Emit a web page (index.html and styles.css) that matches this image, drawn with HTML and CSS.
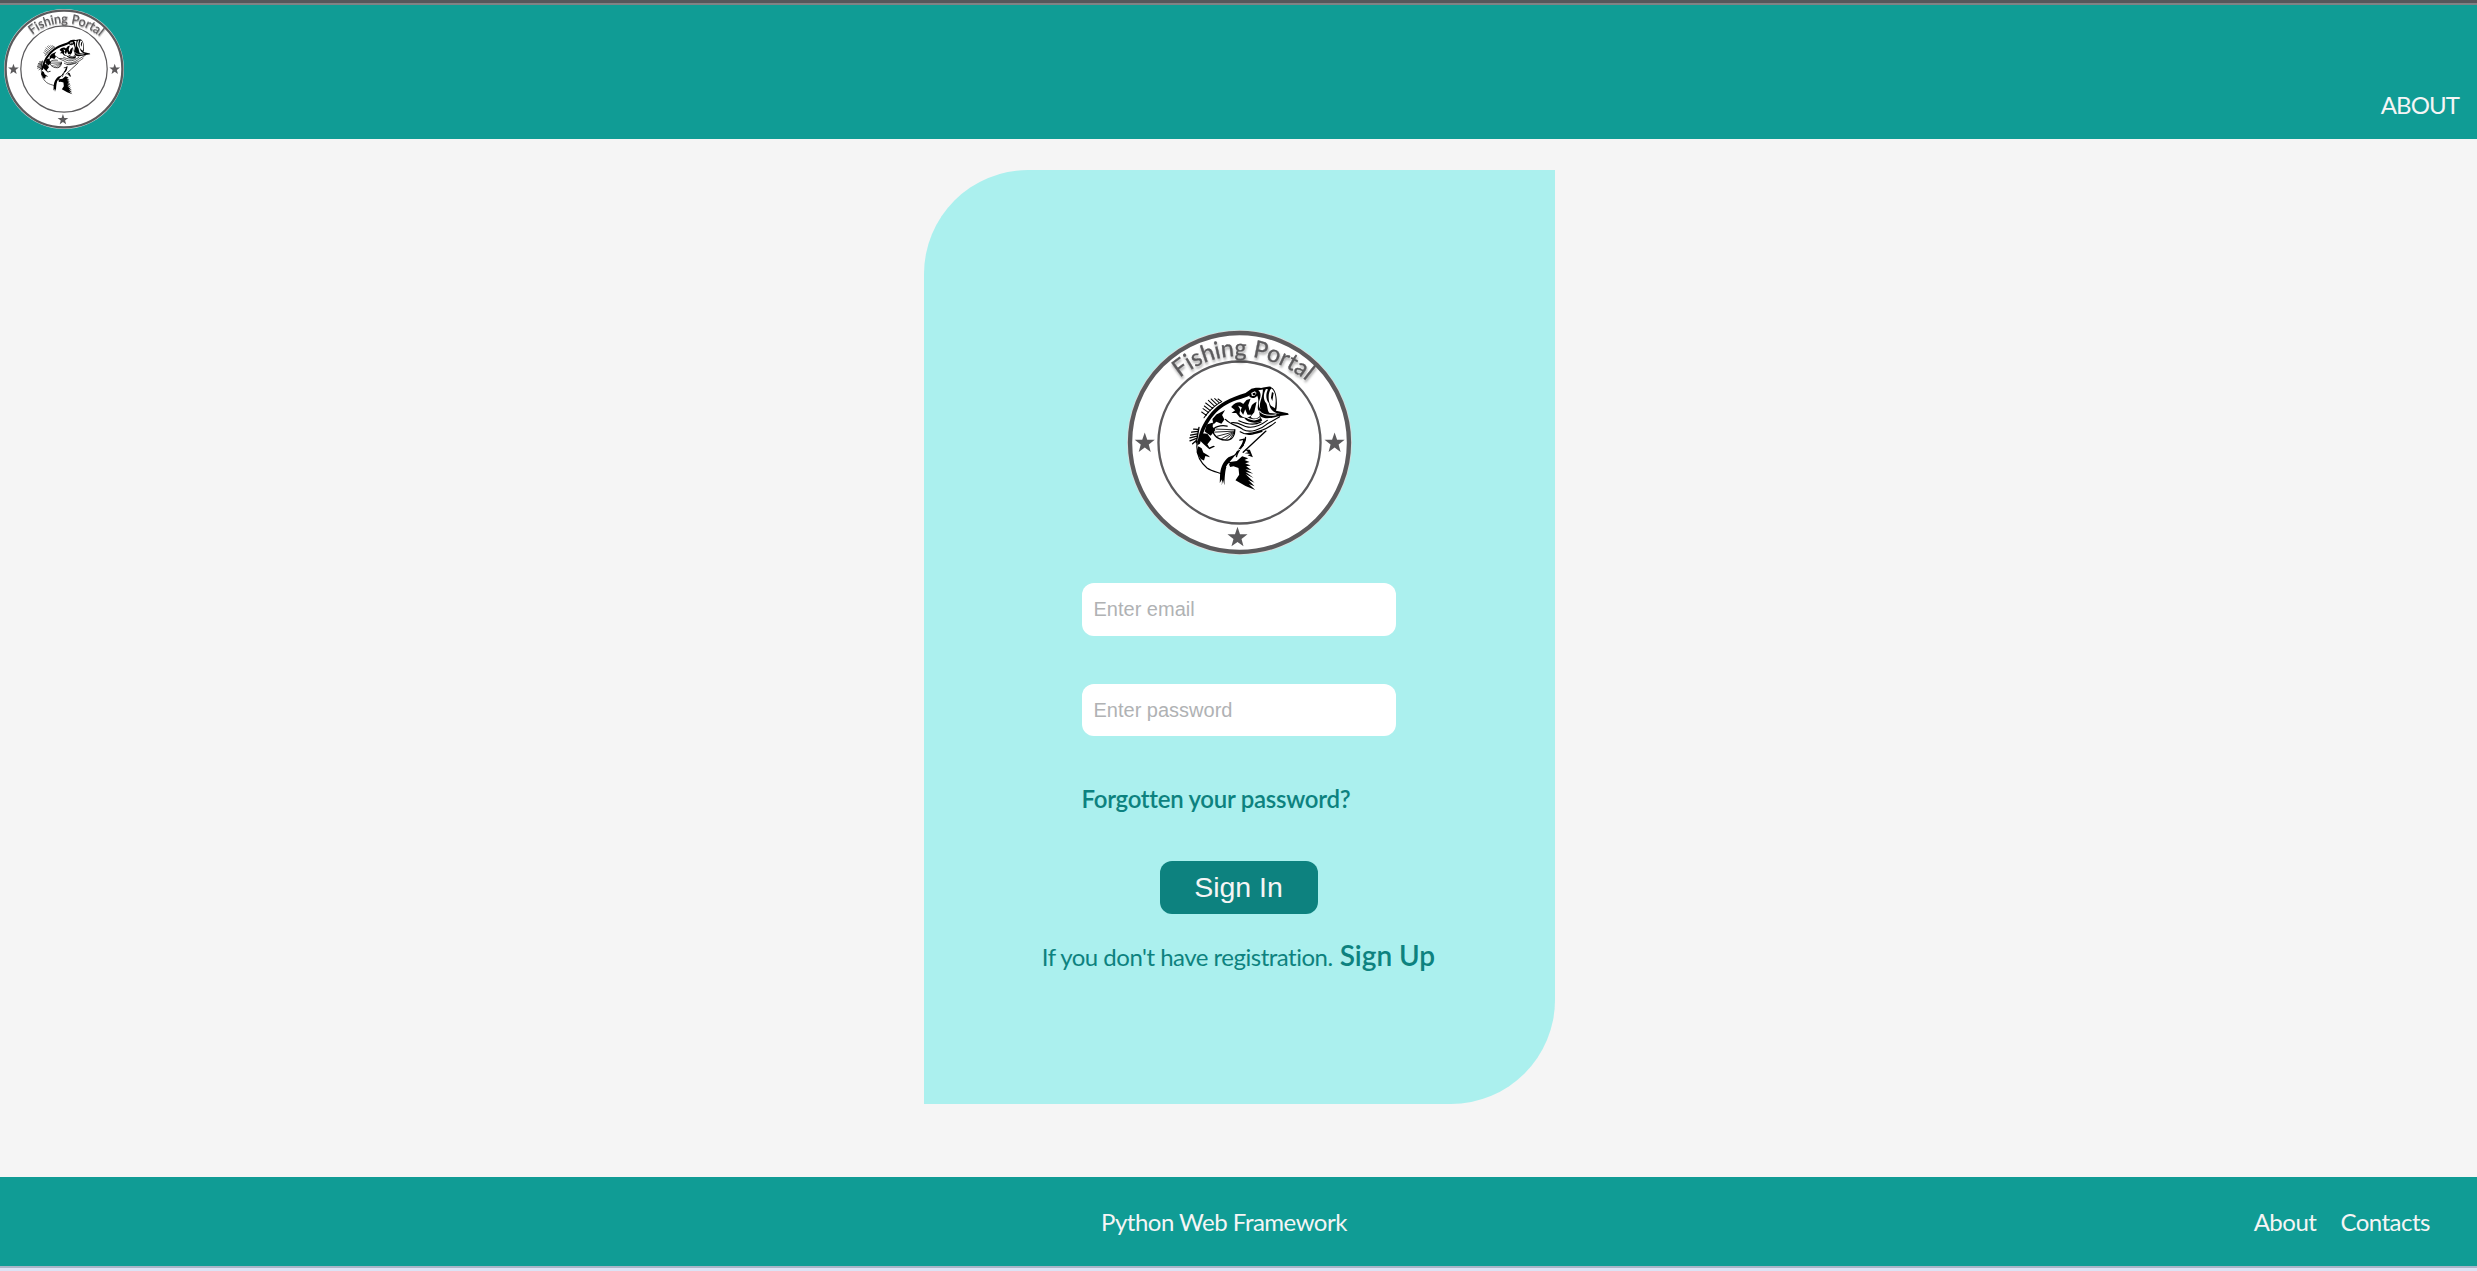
FILE: index.html
```html
<!DOCTYPE html>
<html lang="en">
<head>
<meta charset="utf-8">
<title>Fishing Portal</title>
<link rel="stylesheet" href="styles.css">
</head>
<body>
<svg class="defs" width="0" height="0" aria-hidden="true">
  <defs>
    <path id="arc" d="M212 174 C266 128 330 109 390 109 C464 109 540 138 602 194"/>
    <polygon id="star" points="0,-31 7.5,-9 30,-9 12,5 18,27 0,14 -18,27 -12,5 -30,-9 -7.5,-9"/>
    <symbol id="logo" viewBox="54 31 672 672">
      <circle cx="390" cy="367" r="336" fill="#d9dcdc"/>
      <circle cx="390" cy="367" r="327" fill="#fff" stroke="#5b5a5c" stroke-width="13"/>
      <circle cx="390" cy="367" r="242" fill="none" stroke="#5b5a5c" stroke-width="7"/>
      <g fill="#5b5a5c">
        <use href="#star" x="107" y="368"/><use href="#star" x="674" y="368"/><use href="#star" x="384" y="650"/>
      </g>
      <text class="logo-text"><textPath href="#arc" textLength="411" lengthAdjust="spacingAndGlyphs">Fishing Portal</textPath></text>
      <g transform="translate(3 -2)">
      <!-- back, head and jaw -->
      <path d="M261 377 C263 345 276 311 302 280 C326 252 359 235 405 221 L424 208 L438 208 L431 221 C418 231 405 233 390 239 C361 245 334 263 318 279 C296 302 280 329 269 373Z"/>
      <path d="M424 211 C436 201 450 209 458 205 L476 202 C494 204 501 231 498 266 L496 274 L532 282 L534 286 L508 290 C491 294 474 299 461 296 C439 291 452 282 443 272 C438 263 448 247 440 229 C433 238 422 238 416 231Z"/>
      <path fill="#fff" d="M482 208 C472 218 471 246 481 259 L493 267 C497 244 496 216 482 208Z M466 209 C457 225 458 242 467 252 C472 264 470 276 477 281 L509 284 C489 282 478 271 475 252 C464 239 466 223 472 210Z M443 213 C452 220 451 231 447 241 C443 251 444 262 450 270 C443 252 456 239 457 211Z M422 221 L433 216 L438 221 L432 229 L424 230Z"/>
      <path fill="none" stroke="#fff" stroke-width="3" d="M446 274 C456 288 474 290 497 286"/>
      <path d="M426 222 L435 220 L434 227 L427 228Z M484 218 L489 221 L485 245 L481 235Z"/>
      <path d="M362 263 C376 247 390 246 398 254 L408 242 L420 238 L413 258 L417 274 L424 257 L431 251 L438 247 L431 279 L420 292 C427 301 443 298 448 289 L455 303 C436 315 411 310 401 296 L388 294 L377 281 L363 281 L374 273Z"/>
      <path fill="#fff" d="M383 259 L394 264 L390 274 L398 286 L404 270 L411 286 L423 286 C415 298 397 298 387 284 L389 270Z"/>
      <path fill="none" stroke="#fff" stroke-width="3" d="M404 291 C417 303 437 305 449 295"/>
      <path d="M318 285 L344 272 L335 287 L342 300 L333 313 L318 307 L309 315 L306 299Z M289 315 L308 309 L307 322 L315 332 L301 349 L283 336Z M274 341 L291 343 L303 359 L291 374 L297 384 L309 379 L314 381 L297 389 L281 375 L268 362Z M264 380 L274 386 L279 399 L294 408 L299 413 L285 409 L281 423 L271 418 L259 398Z"/>
      <g fill="none" stroke="#000" stroke-width="3.5" stroke-linecap="round" stroke-linejoin="round">
        <path d="M261 365 C256 397 266 425 290 445 C302 454 318 457 333 462 M345 300 C362 318 384 318 397 330 C419 343 452 329 469 314 L507 292 M363 310 C388 307 395 321 413 323 C438 326 457 313 470 303 M385 304 C409 315 435 317 451 308 M405 343 C436 341 464 334 494 309 M389 337 C410 350 426 345 454 336"/>
        <path d="M350 320 C331 316 306 323 308 337 C313 355 333 363 352 362 C367 360 373 345 373 331" stroke-width="4"/>
        <path d="M371 331 L317 329 M370 335 L313 338 M371 337 L321 350 M372 338 L334 357 M372 339 L346 360 M371 340 L359 358" stroke-width="2.5"/>
        <path d="M288 288 L274 278 M295 280 L278 268 M300 274 L282 260 M307 267 L286 251 M313 261 L294 243 M319 255 L302 239 M326 250 L313 238 M333 246 L323 239 M334 247 C325 251 298 269 281 295" stroke-width="3"/>
        <path d="M264 330 L250 329 M262 336 L244 338 M261 343 L241 347 M260 350 L239 355 M259 357 L239 364 M258 363 L247 373 M266 324 L258 370" stroke-width="4"/>
        <path d="M466 335 L430 368 L398 398 M405 354 C406 376 383 387 378 411 M388 362 L402 359 L398 377 L374 406" stroke-width="4"/>
      </g>
      <path d="M398 358 L405 360 L399 379 L371 411 L351 435 C345 447 343 463 342 497 L338 481 L334 497 L335 479 L328 490 L329 464 C331 440 340 425 354 413 L376 404 C377 391 397 381 398 358Z"/>
      <path d="M353 428 L379 424 L395 410 L413 416 L402 421 L417 427 L404 431 L420 438 L407 440 L422 451 L405 449 L428 462 L405 456 L429 475 L405 463 L432 489 L413 480 L432 500 L415 493 L434 511 L405 499 L375 482 L386 465 L384 445 L369 440 L359 442Z"/>
      <path d="M404 390 L418 391 L427 413 L411 407 L420 403 L402 401 L413 398Z"/>
      <path fill="none" stroke="#fff" stroke-width="3" d="M357 431 L348 442 M373 394 L390 389"/>
      </g>
    </symbol>
  </defs>
</svg>

<header class="header">
  <svg class="header-logo"><use href="#logo"/></svg>
  <a class="header-link">ABOUT</a>
</header>

<main class="main">
  <form class="card">
    <svg class="card-logo"><use href="#logo"/></svg>
    <input class="field" type="email" placeholder="Enter email">
    <input class="field field-password" type="password" placeholder="Enter password">
    <a class="forgot">Forgotten your password?</a>
    <button class="submit" type="button">Sign In</button>
    <p class="register"><span>If you don't have registration.</span><a class="signup">Sign Up</a></p>
  </form>
</main>

<footer class="footer">
  <span>Python Web Framework</span>
  <nav class="footer-links"><a>About</a><a>Contacts</a></nav>
</footer>
</body>
</html>
```
FILE: styles.css
```css
* { box-sizing: border-box; }
body {
  margin: 0;
  height: 1271px;
  display: flex;
  flex-direction: column;
  overflow: hidden;
  background: #f5f5f5;
  font-family: Lato, "Open Sans", sans-serif;
  font-size: 24px;
  line-height: 30px;
  letter-spacing: -.5px;
}
.defs { position: absolute; }
.logo-text {
  font: 71px Lato, sans-serif;
  letter-spacing: 0;
  fill: #5b5a5c;
  stroke: #5b5a5c;
  stroke-width: 1;
  filter: drop-shadow(2px 7px 3px rgba(0, 0, 0, .35));
}
.header {
  flex: none;
  height: 139px;
  display: flex;
  justify-content: space-between;
  padding: 9px 18px 0 4px;
  background: linear-gradient(#56575b 3px, #808285 3px, #808285 5px, #109c95 5px);
  color: #f5f5f5;
}
.header-logo { width: 120px; height: 120px; }
.header-link { margin-top: 81px; letter-spacing: -.9px; }
.main { flex: none; height: 1038px; padding: 31px 0 0 924px; }
.card {
  width: 631px;
  height: 934px;
  padding: 160px 2px 0 0;
  display: flex;
  flex-direction: column;
  align-items: center;
  background: #abf0ee;
  border-radius: 104px 0;
}
.card-logo { width: 225px; height: 225px; flex: none; margin-left: 2px; }
.field {
  width: 314px;
  height: 53px;
  margin: 28px 0 0;
  padding: 0 12px;
  border: 0;
  border-radius: 12px;
  background: #fff;
  font: 20px "Liberation Sans", Arial, sans-serif;
}
.field::placeholder { color: #b0b2b4; opacity: 1; }
.field-password { height: 52px; margin-top: 48px; }
.forgot { width: 314px; margin-top: 48px; color: #0d827f; font-weight: 600; letter-spacing: -.28px; }
.submit {
  width: 158px;
  height: 53px;
  margin: 47px 0 0;
  padding: 0;
  border: 0;
  border-radius: 12px;
  background: #0d827f;
  color: #f5f5f5;
  font: 28.5px "Liberation Sans", Arial, sans-serif;
}
.register { display: flex; align-items: baseline; gap: 7px; margin: 26px 0 0; color: #0d827f; white-space: nowrap; }
.signup { font-size: 28px; font-weight: 600; letter-spacing: 0; }
.footer {
  flex: none;
  height: 94px;
  display: flex;
  justify-content: space-between;
  padding: 30px 47px 0 1101px;
  background: linear-gradient(#109c95 89px, #a9b5c8 89px, #a9b5c8 91px, #dce3f5 91px);
  color: #f5f5f5;
}
.footer-links { display: flex; gap: 24px; }
```
